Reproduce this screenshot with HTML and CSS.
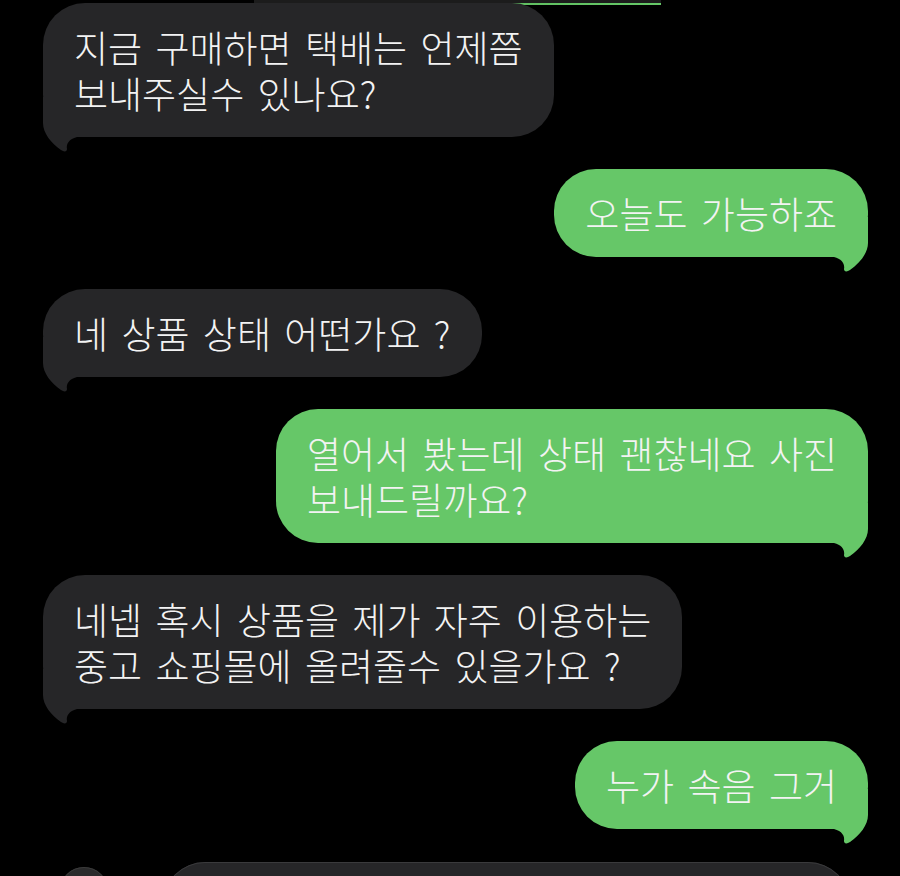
FILE: index.html
```html
<!DOCTYPE html>
<html lang="ko">
<head>
<meta charset="utf-8">
<title>Messages</title>
<link rel="stylesheet" href="styles.css">
</head>
<body>
<div class="chat">
  <div class="top-partial"></div>
  <div class="bubble in">지금 구매하면 택배는 언제쯤<br>보내주실수 있나요?</div>
  <div class="bubble out">오늘도 가능하죠</div>
  <div class="bubble in">네 상품 상태 어떤가요 ?</div>
  <div class="bubble out">열어서 봤는데 상태 괜찮네요 사진<br>보내드릴까요?</div>
  <div class="bubble in">네넵 혹시 상품을 제가 자주 이용하는<br>중고 쇼핑몰에 올려줄수 있을가요 ?</div>
  <div class="bubble out">누가 속음 그거</div>
  <div class="bottom-row">
    <div class="avatar"></div>
    <div class="next-bubble"></div>
  </div>
</div>
</body>
</html>
```

FILE: styles.css
```css
html, body {
  margin: 0;
  background: #000;
}

body {
  font-family: "Noto Sans CJK KR", "Noto Sans", sans-serif;
}

.chat {
  display: flex;
  flex-direction: column;
  gap: 32px;
  padding: 0 32px 0 43px;
  height: 876px;
  box-sizing: border-box;
  overflow: hidden;
}

.top-partial {
  align-self: center;
  flex: none;
  width: 407px;
  height: 5px;
  margin-left: 4px;
  margin-bottom: -34px;
  background: #1c1c1c;
  border-bottom: 2px solid;
  border-image: linear-gradient(to right, #3a3a3a 0%, #3a3a3a 18%, #5dba5d 40%, #66c868 100%) 1;
  box-sizing: border-box;
}

.bubble {
  position: relative;
  z-index: 0;
  flex: none;
  padding: 21px 31px;
  border-radius: 42px;
  font-size: 37px;
  font-weight: 300;
  line-height: 46px;
  word-spacing: 3px;
  color: #f3f3f3;
  white-space: nowrap;
}

.in {
  align-self: flex-start;
  background-color: #262628;
}

.out {
  align-self: flex-end;
  background-color: #66c768;
}

.bubble::after {
  content: "";
  position: absolute;
  z-index: -1;
  bottom: -16px;
  left: 0;
  width: 56px;
  height: 56px;
  background-color: inherit;
  clip-path: path("M0 0 L0 26 C0 36 8 46 18 53 C21 55 24 55 24 52 C23 47 26 42 34 40 L56 40 L56 0 Z");
}

.out::after {
  left: auto;
  right: 0;
  transform: scaleX(-1);
}

.bottom-row {
  display: flex;
  align-items: flex-start;
  flex: none;
  margin-top: 1px;
}

.avatar {
  flex: none;
  width: 48px;
  height: 48px;
  margin: 5px 0 0 17px;
  border-radius: 50%;
  background: #2a2a2b;
  box-shadow: inset 0 1px 0 #3a3a3a;
}

.next-bubble {
  flex: none;
  width: 687px;
  height: 90px;
  margin-left: 55px;
  border-radius: 42px;
  background: #262628;
  box-shadow: inset 0 1px 0 #3a3a3c;
}
```
